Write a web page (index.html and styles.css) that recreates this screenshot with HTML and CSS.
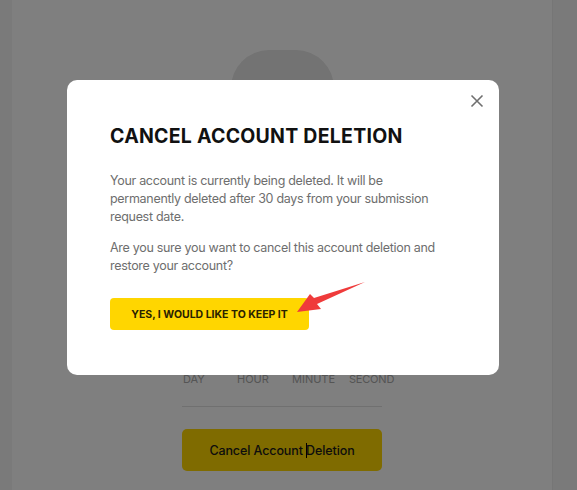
FILE: index.html
```html
<!DOCTYPE html>
<html>
<head>
<meta charset="utf-8">
<link rel="stylesheet" href="styles.css">
</head>
<body>
<div class="page">
  <div class="card">
    <div class="avatar"></div>
    <div class="numbers"></div>
    <div class="labels">
      <span>DAY</span><span>HOUR</span><span>MINUTE</span><span>SECOND</span>
    </div>
    <div class="rule"></div>
    <button class="cancel-btn">Cancel Account <span class="caret"></span>Deletion</button>
  </div>
</div>
<div class="overlay"></div>
<div class="modal">
  <button class="close" aria-label="Close">
    <svg width="14" height="14" viewBox="0 0 14 14"><path d="M1.5 1.5L12.5 12.5M12.5 1.5L1.5 12.5" stroke="#6f6f6f" stroke-width="1.6" fill="none"/></svg>
  </button>
  <h1 class="title">CANCEL ACCOUNT DELETION</h1>
  <p class="text">Your account is currently being deleted. It will be permanently deleted after 30 days from your submission request date.</p>
  <p class="text">Are you sure you want to cancel this account deletion and restore your account?</p>
  <button class="keep-btn">YES, I WOULD LIKE TO KEEP IT</button>
</div>
<svg class="arrow" width="577" height="490" viewBox="0 0 577 490">
  <polygon points="297,312 310,294 314,298 365,282 317,304 321,309" fill="#ef3b3b"/>
</svg>
</body>
</html>
```

FILE: styles.css
```css
html, body {
  margin: 0;
  padding: 0;
}
body {
  background: #f4f4f4;
  width: 577px;
  height: 490px;
  overflow: hidden;
  font-family: Inter, "Open Sans", sans-serif;
}
.page {
  display: flex;
  height: 490px;
  padding-left: 12px;
}
.card {
  width: 541px;
  background: #ffffff;
  display: flex;
  flex-direction: column;
  align-items: center;
  box-sizing: border-box;
  padding-top: 50px;
  border-right: 1px solid #ececec;
}
.avatar {
  width: 103px;
  height: 90px;
  background: #e6e6e6;
  border-radius: 38px 38px 20px 20px;
}
.numbers {
  height: 232px;
}
.labels {
  display: flex;
  font-size: 11px;
  color: #aaaaaa;
  margin-left: 22px;
  width: 220px;
}
.labels span:nth-child(1) { width: 54px; }
.labels span:nth-child(2) { width: 55px; }
.labels span:nth-child(3) { width: 57px; }
.labels span:nth-child(4) { width: 54px; letter-spacing: -0.2px; }
.rule {
  width: 200px;
  height: 1px;
  background: #e0e0e0;
  margin-top: 20px;
}
.cancel-btn {
  margin-top: 22px;
  width: 200px;
  height: 42px;
  border: none;
  border-radius: 5px;
  background: #ffd600;
  color: #1a1a1a;
  font-family: inherit;
  font-size: 12.5px;
  font-weight: 500;
  letter-spacing: -0.1px;
}
.caret {
  display: inline-block;
  width: 1px;
  height: 15px;
  background: #000;
  vertical-align: -3px;
  margin-right: -1px;
}
.overlay {
  position: fixed;
  inset: 0;
  background: rgba(0, 0, 0, 0.5);
}
.modal {
  position: absolute;
  left: 67px;
  top: 80px;
  width: 432px;
  height: 295px;
  box-sizing: border-box;
  background: #ffffff;
  border-radius: 10px;
  padding: 44px 43px 0 43px;
}
.close {
  position: absolute;
  right: 15px;
  top: 14px;
  width: 14px;
  height: 14px;
  padding: 0;
  border: none;
  background: none;
}
.close svg { display: block; }
.title {
  margin: 0;
  font-size: 19.5px;
  font-weight: 700;
  color: #111111;
  line-height: 24px;
  letter-spacing: 0.25px;
}
.text {
  margin: 0;
  font-size: 12.5px;
  line-height: 18px;
  color: #6e6e6e;
  width: 336px;
  letter-spacing: -0.3px;
}
.title + .text { margin-top: 24px; }
.text + .text { margin-top: 13px; }
.keep-btn {
  margin-top: 23px;
  width: 199px;
  height: 32px;
  border: none;
  border-radius: 4px;
  background: #ffd600;
  color: #2a2200;
  font-family: inherit;
  font-weight: 700;
  font-size: 10.5px;
  padding: 0;
}
.arrow {
  position: absolute;
  left: 0;
  top: 0;
}
```
